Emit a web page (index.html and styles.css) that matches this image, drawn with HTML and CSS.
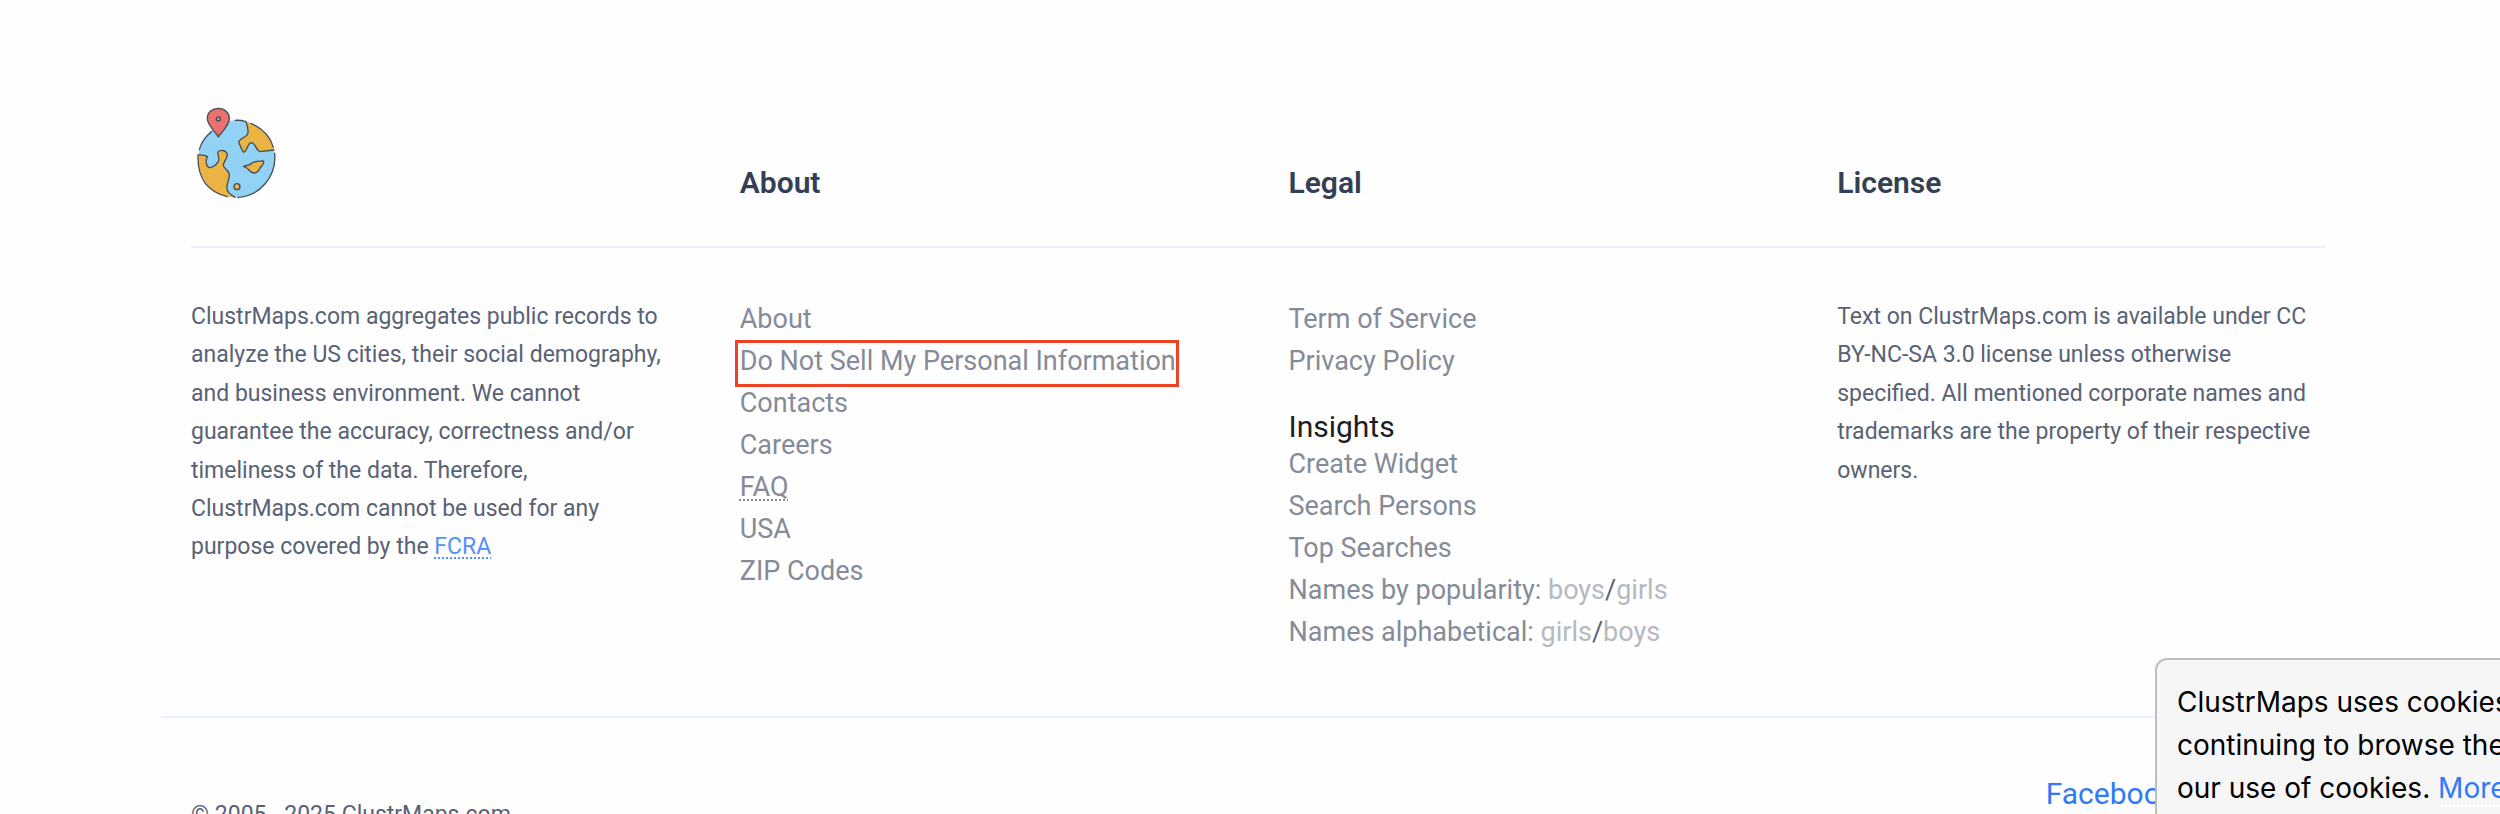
FILE: index.html
```html
<!DOCTYPE html>
<html lang="en">
<head>
<meta charset="utf-8">
<title>ClustrMaps.com</title>
<link rel="stylesheet" href="styles.css">
</head>
<body>
<footer class="footer">
  <div class="grid head">
    <a class="logo" href="#" aria-label="ClustrMaps">
      <svg width="90" height="95" viewBox="36 45 270 285" fill="none" stroke-linecap="round" stroke-linejoin="round">
        <circle cx="173" cy="203" r="115" fill="#92d3f5"/>
        <g fill="#ebb341">
          <path d="M57 192L83 194C81 207 81 229 93 230C105 229 120 214 120 204C120 196 113 188 118 182C123 176 139 177 144 187C149 199 134 211 133 222C131 233 151 237 151 251C151 266 142 279 144 295C147 306 158 313 169 319C98 318 56 262 57 192Z"/>
          <path d="M204 93C242 104 276 138 285 177L243 182C232 179 229 157 218 155C207 155 207 180 194 183C190 181 182 162 179 154C180 141 206 140 207 126C207 115 202 103 204 93Z"/>
          <path d="M194 226C199 223 209 224 214 220C219 210 239 211 253 210C259 216 248 224 243 231C239 241 231 246 224 246C212 245 210 234 203 231Z"/>
          <circle cx="174" cy="287" r="9"/>
        </g>
        <g stroke="#474d59" stroke-width="4">
          <path d="M168 88Q185 87 201 92Q208 107 207 126C206 140 180 141 179 154L191 181Q195 186 200 179C208 166 208 155 218 155C229 157 232 179 243 182L285 177M216 97Q269 120 283 169M287 187C293 257 242 316 176 319M168 319C158 313 147 306 144 295C142 279 151 266 151 251C151 237 131 233 133 222C134 211 149 199 144 187C139 177 123 176 118 182C113 188 120 196 120 204C120 214 105 229 93 230C81 229 78 208 86 197Q75 191 57 192Q54 294 145 317M98 122Q69 144 61 176"/>
          <path d="M194 226C199 223 209 224 214 220C219 210 239 211 253 210C259 216 248 224 243 231C239 241 231 246 224 246C212 245 210 234 203 231Z"/>
          <circle cx="174" cy="287" r="9"/>
          <path fill="#ea716f" d="M118 138C108 120 85 104 85 82C85 64 100 52 118 52C137 52 151 65 151 83C151 103 128 122 118 138Z"/>
          <circle cx="118" cy="84" r="6" fill="#c9a0a2"/>
        </g>
      </svg>
    </a>
    <h2 class="title">About</h2>
    <h2 class="title">Legal</h2>
    <h2 class="title">License</h2>
  </div>
  <hr class="rule">
  <div class="grid columns">
    <p class="copy">ClustrMaps.com aggregates public records to analyze the US cities, their social demography, and business environment. We cannot guarantee the accuracy, correctness and/or timeliness of the data. Therefore, ClustrMaps.com cannot be used for any purpose covered by the <a class="fcra abbr" href="#">FCRA</a></p>
    <ul class="links">
      <li><a href="#">About</a></li>
      <li><a class="marked" href="#">Do Not Sell My Personal Information</a></li>
      <li><a href="#">Contacts</a></li>
      <li><a href="#">Careers</a></li>
      <li><a class="abbr" href="#">FAQ</a></li>
      <li><a href="#">USA</a></li>
      <li><a href="#">ZIP Codes</a></li>
    </ul>
    <div>
      <ul class="links">
        <li><a href="#">Term of Service</a></li>
        <li><a href="#">Privacy Policy</a></li>
      </ul>
      <h3 class="subtitle">Insights</h3>
      <ul class="links">
        <li><a href="#">Create Widget</a></li>
        <li><a href="#">Search Persons</a></li>
        <li><a href="#">Top Searches</a></li>
        <li>Names by popularity: <a class="pale" href="#">boys</a><span class="slash">/</span><a class="pale" href="#">girls</a></li>
        <li>Names alphabetical: <a class="pale" href="#">girls</a><span class="slash">/</span><a class="pale" href="#">boys</a></li>
      </ul>
    </div>
    <p class="copy">Text on ClustrMaps.com is available under CC BY-NC-SA 3.0 license unless otherwise specified. All mentioned corporate names and trademarks are the property of their respective owners.</p>
  </div>
  <div class="bottom">
    <p class="copy">© 2005 - 2025 ClustrMaps.com</p>
    <a class="social" href="#">Facebook</a>
  </div>
</footer>
<aside class="cookies">
  <p>ClustrMaps uses cookies<br>continuing to browse the<br>our use of cookies. <a href="#">More</a></p>
</aside>
</body>
</html>
```
FILE: styles.css
```css
* { box-sizing: border-box; }
html, body { height: 100%; overflow: hidden; }
body { margin: 0; background: #fefefe; font-family: Roboto, sans-serif; color: #596275; }
h2, h3, p, ul { margin: 0; padding: 0; }
ul { list-style: none; }
a { color: inherit; text-decoration: none; }

.footer { padding: 106px 144px 0 161px; }
.grid { display: grid; grid-template-columns: repeat(4, 1fr); }
.grid > * { padding: 0 30px; }
.head { align-items: end; padding-bottom: 45px; }
.logo svg { display: block; }
.title { font-size: 30px; line-height: 36px; font-weight: 600; color: #333f54; }
.rule { height: 2px; margin: 0 30px; border: 0; background: #ebf1fd; }
.columns { padding-top: 50px; align-items: start; }
.copy { font-size: 23px; line-height: 1.67; color: #596275; }

.links { font-size: 27px; line-height: 42px; color: #858b98; }
.links li { white-space: nowrap; }
.abbr { text-decoration: underline dotted 2px; text-underline-offset: 3px; text-decoration-skip-ink: none; }
.fcra { color: #558ffa; }
.pale { color: #b5b9c1; }
.slash { color: #596275; }
.subtitle { margin-top: 29px; font-size: 30px; line-height: 32px; font-weight: 400; color: #1c2024; }

/* Frame around the highlighted link */
.marked { position: relative; }
.marked::after { content: ""; position: absolute; inset: -5px -3px -10px -5px; border: 3px solid #ee4224; }

.bottom { display: flex; justify-content: space-between; margin-top: 63px; padding: 56px 180px 0 30px; border-top: 2px solid #ebf1fd; }
.bottom .copy { padding-top: 22px; }
.social { font-size: 30px; line-height: 40px; color: #3079fb; }

.cookies { position: fixed; left: calc(100% - 345px); right: -240px; top: 658px; height: 240px; padding: 21px 20px; border: 2px solid #bdbdbd; border-radius: 12px; background: #f6f6f6; color: #000; font: 28px/43px Inter, sans-serif; white-space: nowrap; }
.cookies a { color: #3079fb; border-bottom: 2px dotted #fff; }
```
